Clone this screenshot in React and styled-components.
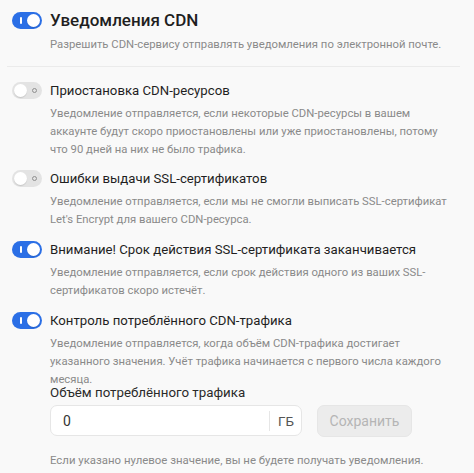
import React, { useState } from 'react';
import styled, { createGlobalStyle } from 'styled-components';

const GlobalStyle = createGlobalStyle`
  body {
    margin: 0;
    background: #f9f9f9;
    font-family: Roboto, 'Liberation Sans', sans-serif;
    -webkit-font-smoothing: antialiased;
  }
`;

const Panel = styled.div`
  width: 474px;
  height: 473px;
  box-sizing: border-box;
  padding: 10px 14px 0 7px;
  background: #f9f9f9;
  overflow: hidden;
`;

const Section = styled.div`
  display: grid;
  grid-template-columns: 30px 1fr;
  column-gap: 8px;
  padding: 0 12px ${(p) => p.$gap || 0}px 5px;
  border-bottom: ${(p) => (p.$divider ? '1px solid #ebebeb' : 'none')};
  margin-bottom: ${(p) => p.$after || 0}px;
`;

const Head = styled.div`
  grid-column: 1 / 3;
  display: flex;
  align-items: center;
  gap: 8px;
  height: 20px;
`;

const Track = styled.button`
  position: relative;
  width: 30px;
  height: 17px;
  padding: 0;
  border: none;
  border-radius: 9px;
  background: ${(p) => (p.$on ? '#2b6fe6' : '#e3e3e3')};
  cursor: pointer;
  flex-shrink: 0;
`;

const Knob = styled.span`
  position: absolute;
  top: 2px;
  left: ${(p) => (p.$on ? '15px' : '2px')};
  width: 13px;
  height: 13px;
  border-radius: 50%;
  background: #fff;
  box-shadow: 0 1px 1px rgba(0, 0, 0, 0.12);
`;

const OnMark = styled.span`
  position: absolute;
  left: 8px;
  top: 5px;
  width: 1.5px;
  height: 7px;
  background: #fff;
  border-radius: 1px;
`;

const OffMark = styled.span`
  position: absolute;
  right: 5px;
  top: 6px;
  width: 3px;
  height: 3px;
  border: 1.4px solid #8f8f8f;
  border-radius: 50%;
`;

const Title = styled.div`
  font-size: ${(p) => (p.$main ? '17px' : '13.2px')};
  font-weight: ${(p) => (p.$main ? 500 : 400)};
  color: #1f1f1f;
  white-space: nowrap;
`;

const Desc = styled.p`
  grid-column: 2;
  margin: ${(p) => p.$top || 5}px 0 0;
  font-size: 11.3px;
  line-height: 18px;
  color: #8a8a8a;
`;

const Label = styled.div`
  grid-column: 2;
  margin-top: -4px;
  font-size: 13.3px;
  line-height: 16px;
  color: #2a2a2a;
`;

const FormRow = styled.div`
  grid-column: 2;
  display: flex;
  gap: 15px;
  margin-top: 4px;
`;

const InputBox = styled.div`
  display: flex;
  align-items: center;
  width: 252px;
  height: 31px;
  box-sizing: border-box;
  background: #fff;
  border: 1px solid #e6e6e6;
  border-radius: 7px;
  padding: 0 7px 0 10px;
`;

const Input = styled.input`
  flex: 1;
  min-width: 0;
  border: none;
  outline: none;
  background: transparent;
  font-family: inherit;
  font-size: 14px;
  color: #333;
`;

const Unit = styled.span`
  border-left: 1px solid #e6e6e6;
  padding-left: 8px;
  height: 20px;
  line-height: 20px;
  font-size: 13.5px;
  color: #555;
`;

const SaveButton = styled.button`
  width: 95px;
  height: 32px;
  border: 1px solid #e6e6e6;
  border-radius: 7px;
  background: #ececec;
  color: #b5b5b5;
  font-family: inherit;
  font-size: 14px;
  cursor: default;
`;

const Hint = styled.p`
  grid-column: 2;
  margin: 14px 0 0;
  font-size: 11.4px;
  line-height: 18px;
  color: #8a8a8a;
`;

const Toggle = ({ on, onClick }) => (
  <Track $on={on} onClick={onClick}>
    {on ? <OnMark /> : <OffMark />}
    <Knob $on={on} />
  </Track>
);

const App = () => {
  const [state, setState] = useState({ main: true, pause: false, ssl: false, expire: true, traffic: true });
  const flip = (k) => () => setState((s) => ({ ...s, [k]: !s[k] }));

  return (
    <Panel>
      <GlobalStyle />
      <Section $divider $gap={12} $after={13}>
        <Head>
          <Toggle on={state.main} onClick={flip('main')} />
          <Title $main>Уведомления CDN</Title>
        </Head>
        <Desc $top={6}>Разрешить CDN-сервису отправлять уведомления по электронной почте.</Desc>
      </Section>

      <Section $after={9}>
        <Head>
          <Toggle on={state.pause} onClick={flip('pause')} />
          <Title>Приостановка CDN-ресурсов</Title>
        </Head>
        <Desc>
          Уведомление отправляется, если некоторые CDN-ресурсы в вашем аккаунте будут скоро приостановлены или уже
          приостановлены, потому что 90 дней на них не было трафика.
        </Desc>
      </Section>

      <Section $after={10}>
        <Head>
          <Toggle on={state.ssl} onClick={flip('ssl')} />
          <Title>Ошибки выдачи SSL-сертификатов</Title>
        </Head>
        <Desc>Уведомление отправляется, если мы не смогли выписать SSL-сертификат Let's Encrypt для вашего CDN-ресурса.</Desc>
      </Section>

      <Section $after={10}>
        <Head>
          <Toggle on={state.expire} onClick={flip('expire')} />
          <Title>Внимание! Срок действия SSL-сертификата заканчивается</Title>
        </Head>
        <Desc>Уведомление отправляется, если срок действия одного из ваших SSL-сертификатов скоро истечёт.</Desc>
      </Section>

      <Section>
        <Head>
          <Toggle on={state.traffic} onClick={flip('traffic')} />
          <Title>Контроль потреблённого CDN-трафика</Title>
        </Head>
        <Desc $top={5}>
          Уведомление отправляется, когда объём CDN-трафика достигает указанного значения. Учёт трафика начинается с
          первого числа каждого месяца.
        </Desc>
        <Label>Объём потреблённого трафика</Label>
        <FormRow>
          <InputBox>
            <Input defaultValue="0" />
            <Unit>ГБ</Unit>
          </InputBox>
          <SaveButton disabled>Сохранить</SaveButton>
        </FormRow>
        <Hint>Если указано нулевое значение, вы не будете получать уведомления.</Hint>
      </Section>
    </Panel>
  );
};

export default App;
